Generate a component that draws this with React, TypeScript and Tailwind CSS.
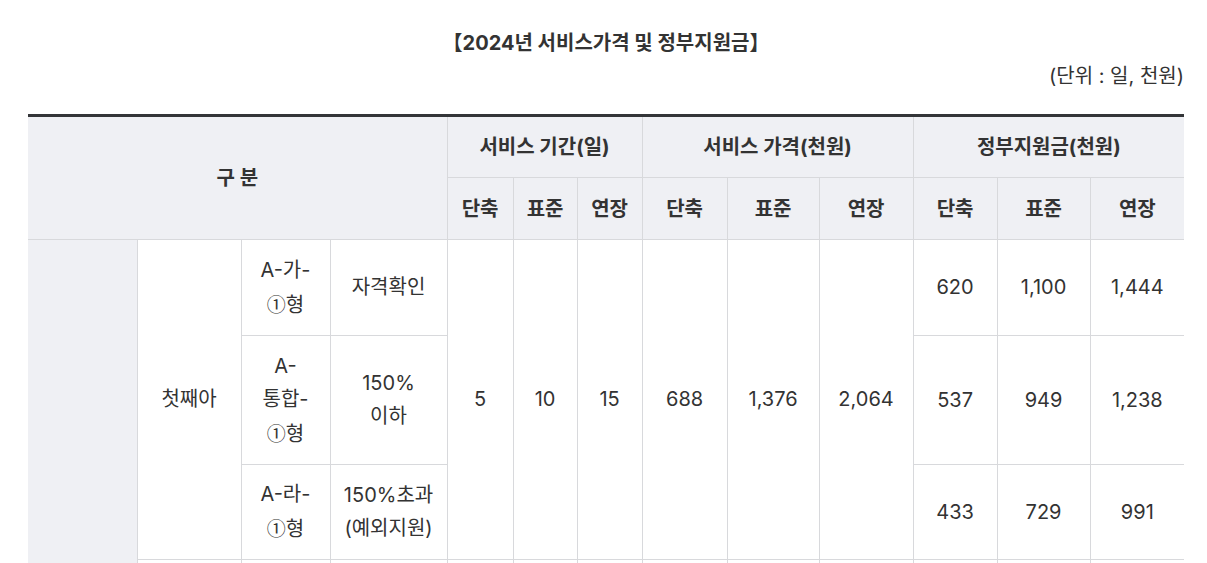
import React from 'react';

const COLS = [109, 104, 89, 117, 66, 64, 65, 85, 92, 94, 84, 93, 94];

const SUPPORT = [
  { type: ['A-가-', '①형'], cond: ['자격확인'], vals: ['620', '1,100', '1,444'], h: 'h-[96px]' },
  { type: ['A-', '통합-', '①형'], cond: ['150%', '이하'], vals: ['537', '949', '1,238'], h: 'h-[129px]' },
  { type: ['A-라-', '①형'], cond: ['150%초과', '(예외지원)'], vals: ['433', '729', '991'], h: 'h-[95px]' },
];

const th = 'border border-[#d8d9dc] bg-[#eff0f4] font-bold text-[#333] text-center align-middle';
const td = 'border border-[#d8d9dc] text-center align-middle text-[#333] leading-[33px]';

// the circled digit is drawn smaller than the fallback glyph
const Line: React.FC<{ text: string }> = ({ text }) => {
  if (!text.startsWith('①')) return <>{text}</>;
  return (
    <>
      <span className="text-[19px] font-['Noto_Sans_CJK_KR',sans-serif]">①</span>
      {text.slice(1)}
    </>
  );
};

const Lines: React.FC<{ lines: string[] }> = ({ lines }) => (
  <>
    {lines.map((l, i) => (
      <React.Fragment key={i}>
        {i > 0 && <br />}
        <Line text={l} />
      </React.Fragment>
    ))}
  </>
);

const App: React.FC = () => {
  return (
    <div className="h-screen w-full overflow-hidden bg-white font-['Inter','Noto_Sans_CJK_KR',sans-serif] text-[20px] text-[#333]">
      <div className="ml-[28px] w-[1156px]">
        <h2 className="pt-[30px] text-center text-[20px] font-bold leading-[26px] text-[#333]">
          【2024년 서비스가격 및 정부지원금】
        </h2>
        <p className="mt-[7px] text-right text-[20px] leading-[26px] text-[#333]">(단위 : 일, 천원)</p>

        <table className="mt-[25px] w-full table-fixed border-collapse border-t-[3px] border-t-[#333538]">
          <colgroup>
            {COLS.map((w, i) => (
              <col key={i} style={{ width: w }} />
            ))}
          </colgroup>
          <thead>
            <tr>
              <th colSpan={4} rowSpan={2} className={`${th} border-l-0 border-t-[3px] border-t-[#333538]`}>
                구 분
              </th>
              <th colSpan={3} className={`${th} h-[62px] border-t-[3px] border-t-[#333538]`}>서비스 기간(일)</th>
              <th colSpan={3} className={`${th} border-t-[3px] border-t-[#333538]`}>서비스 가격(천원)</th>
              <th colSpan={3} className={`${th} border-r-0 border-t-[3px] border-t-[#333538]`}>정부지원금(천원)</th>
            </tr>
            <tr>
              {['단축', '표준', '연장', '단축', '표준', '연장', '단축', '표준', '연장'].map((t, i) => (
                <th key={i} className={`${th} h-[62px] ${i === 8 ? 'border-r-0' : ''}`}>
                  {t}
                </th>
              ))}
            </tr>
          </thead>
          <tbody>
            {['첫째아', '둘째아'].map((child, g) =>
              SUPPORT.map((row, i) => (
                <tr key={`${g}-${i}`}>
                  {g === 0 && i === 0 && (
                    <td rowSpan={6} className="border border-l-0 border-[#d8d9dc] bg-[#eff0f4]" />
                  )}
                  {i === 0 && (
                    <td rowSpan={3} className={td}>
                      {child}
                    </td>
                  )}
                  <td className={`${td} ${row.h}`}>
                    <Lines lines={row.type} />
                  </td>
                  <td className={td}>
                    <Lines lines={row.cond} />
                  </td>
                  {i === 0 && (
                    <>
                      <td rowSpan={3} className={td}>5</td>
                      <td rowSpan={3} className={td}>10</td>
                      <td rowSpan={3} className={td}>15</td>
                      <td rowSpan={3} className={td}>688</td>
                      <td rowSpan={3} className={td}>1,376</td>
                      <td rowSpan={3} className={td}>2,064</td>
                    </>
                  )}
                  {row.vals.map((v, j) => (
                    <td key={j} className={`${td} ${j === 2 ? 'border-r-0' : ''}`}>
                      {v}
                    </td>
                  ))}
                </tr>
              ))
            )}
          </tbody>
        </table>
      </div>
    </div>
  );
};

export default App;
